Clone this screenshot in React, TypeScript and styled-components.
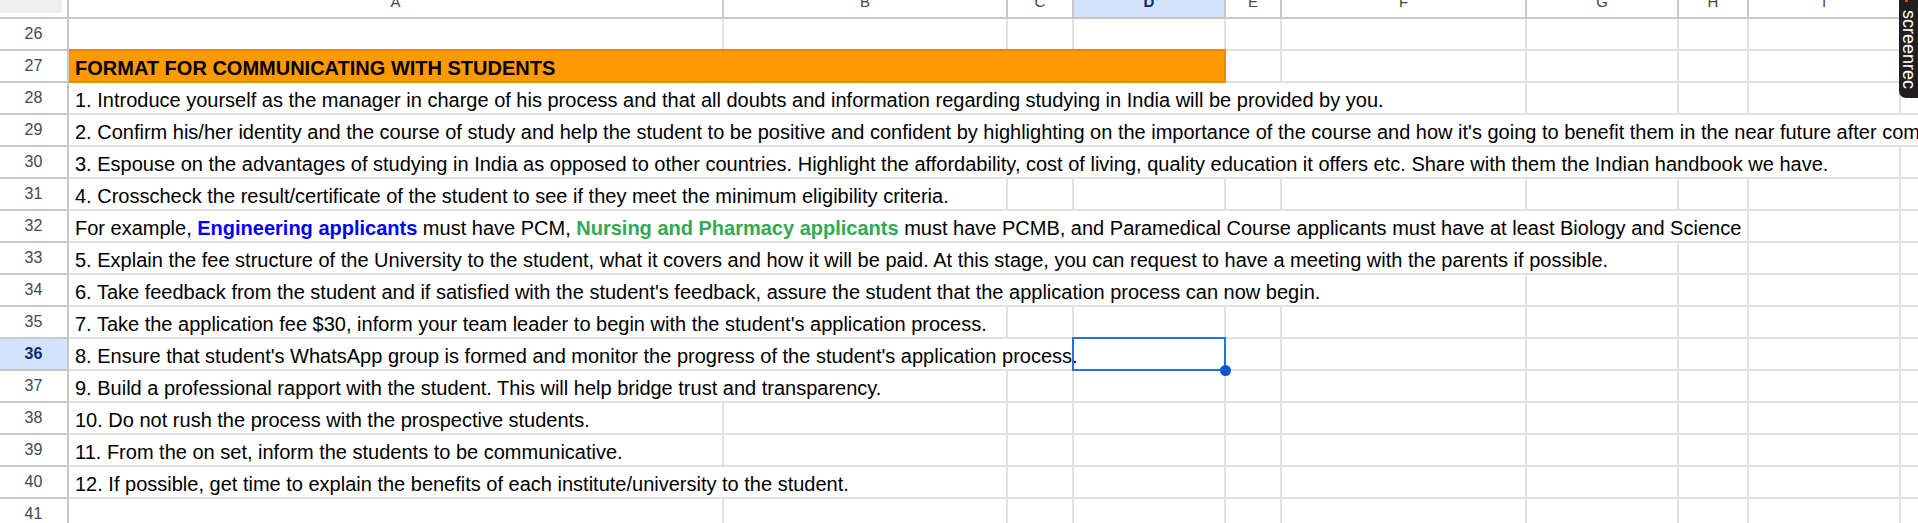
import React from "react";
import styled, { createGlobalStyle } from "styled-components";

const GlobalStyle = createGlobalStyle`
  html, body {
    margin: 0;
    padding: 0;
    background: #ffffff;
    overflow: hidden;
  }
  body {
    font-family: "Liberation Sans", Arial, sans-serif;
  }
`;

const COLS = [655, 284, 66, 152, 56, 245, 152, 70, 152, 152];
const LETTERS = ["A", "B", "C", "D", "E", "F", "G", "H", "I", "J"];
const SELECTED_COL = 3;
const SELECTED_ROW = 36;
const GRID = COLS.map((w) => `${w}px`).join(" ");

const Sheet = styled.div`
  position: relative;
  width: 1918px;
  height: 523px;
  overflow: hidden;
  background: #ffffff;
`;

const HeaderRow = styled.div`
  display: flex;
  height: 19px;
`;

const Corner = styled.div`
  width: 67px;
  height: 17px;
  flex: none;
  border-right: 2px solid #c7c7c7;
  border-bottom: 2px solid #c7c7c7;
  display: flex;
  align-items: flex-start;
  justify-content: flex-start;
`;

const CornerShade = styled.div`
  width: 62px;
  height: 13px;
  background: #efefef;
`;

const ColHeaders = styled.div`
  display: grid;
  grid-template-columns: ${GRID};
  flex: none;
`;

const ColHeader = styled.div<{ $active?: boolean }>`
  box-sizing: content-box;
  height: 9px;
  padding-bottom: 8px;
  border-right: 2px solid #c7c7c7;
  border-bottom: 2px solid #c7c7c7;
  background: ${(p) => (p.$active ? "#d3e3fd" : "#ffffff")};
  color: ${(p) => (p.$active ? "#0b2a6b" : "#444746")};
  font-weight: ${(p) => (p.$active ? 700 : 400)};
  font-size: 15px;
  line-height: 15px;
  display: flex;
  align-items: flex-end;
  justify-content: center;
  overflow: visible;
`;

const Row = styled.div`
  display: flex;
  height: 32px;
`;

const RowHeader = styled.div<{ $active?: boolean }>`
  width: 67px;
  height: 30px;
  flex: none;
  border-right: 2px solid #c7c7c7;
  border-bottom: 2px solid #c7c7c7;
  background: ${(p) => (p.$active ? "#d3e3fd" : "#ffffff")};
  color: ${(p) => (p.$active ? "#0b2a6b" : "#444746")};
  font-weight: ${(p) => (p.$active ? 700 : 400)};
  font-size: 16px;
  display: flex;
  align-items: center;
  justify-content: center;
`;

const Cells = styled.div`
  display: grid;
  grid-template-columns: ${GRID};
  flex: none;
`;

const Cell = styled.div`
  height: 30px;
  border-right: 2px solid #e1e1e1;
  border-bottom: 2px solid #e1e1e1;
  background: #ffffff;
  position: relative;
`;

const TextCell = styled.div<{ $span: number }>`
  grid-column: span ${(p) => p.$span};
  position: relative;
  z-index: 1;
  box-sizing: border-box;
  height: 32px;
  border-right: 2px solid #e1e1e1;
  border-bottom: 2px solid #e1e1e1;
  background: #ffffff;
  display: flex;
  align-items: flex-end;
  padding: 0 0 1px 6px;
  white-space: nowrap;
  overflow: visible;
  font-size: 20px;
  line-height: 23px;
  color: #000000;
`;

const TitleCell = styled(TextCell)`
  background: #ff9900;
  border-right-color: #e68a00;
  border-bottom-color: #e68a00;
  box-shadow: 0 -2px 0 #e68a00;
  font-weight: 700;
`;

const Line = styled.span`
  display: block;
`;

const Strong = styled.span<{ $color: string }>`
  font-weight: 700;
  color: ${(p) => p.$color};
`;

const SelectionBox = styled.div`
  position: absolute;
  z-index: 2;
  left: -2px;
  top: -2px;
  right: -2px;
  bottom: -2px;
  border: 2px solid #1a73e8;
  pointer-events: none;
`;

const FillHandle = styled.div`
  position: absolute;
  right: -7px;
  bottom: -7px;
  width: 11px;
  height: 11px;
  border-radius: 50%;
  background: #0b57d0;
`;

const Badge = styled.div`
  position: absolute;
  z-index: 3;
  top: 0;
  right: 0;
  width: 19px;
  height: 98px;
  background: #1f1f1f;
  border-bottom-left-radius: 7px;
  color: #ffffff;
  writing-mode: vertical-rl;
  font-family: "Liberation Sans", Arial, sans-serif;
  font-size: 18px;
  line-height: 19px;
  display: flex;
  align-items: center;
  justify-content: flex-end;
  padding-bottom: 9px;
  box-sizing: border-box;
`;

const BadgeDot = styled.span`
  position: absolute;
  top: 0;
  left: 6px;
  width: 3px;
  height: 2px;
  background: #e53935;
`;

type RowData = {
  n: number;
  span?: number;
  title?: boolean;
  content?: React.ReactNode;
};

const rows: RowData[] = [
  { n: 26 },
  { n: 27, title: true, span: 4, content: "FORMAT FOR COMMUNICATING WITH STUDENTS" },
  {
    n: 28,
    span: 6,
    content:
      "1. Introduce yourself as the manager in charge of his process and that all doubts and information regarding studying in India will be provided by you.",
  },
  {
    n: 29,
    span: 10,
    content:
      "2. Confirm his/her identity and the course of study and help the student to be positive and confident by highlighting on the importance of the course and how it's going to benefit them in the near future after completion.",
  },
  {
    n: 30,
    span: 9,
    content:
      "3. Espouse on the advantages of studying in India as opposed to other countries. Highlight the affordability, cost of living, quality education it offers etc. Share with them the Indian handbook we have.",
  },
  {
    n: 31,
    span: 2,
    content:
      "4. Crosscheck the result/certificate of the student to see if they meet the minimum eligibility criteria.",
  },
  {
    n: 32,
    span: 8,
    content: (
      <>
        For example, <Strong $color="#0000ff">Engineering applicants</Strong> must have PCM,{" "}
        <Strong $color="#34a853">Nursing and Pharmacy applicants</Strong> must have PCMB, and
        Paramedical Course applicants must have at least Biology and Science
      </>
    ),
  },
  {
    n: 33,
    span: 7,
    content:
      "5. Explain the fee structure of the University to the student, what it covers and how it will be paid. At this stage, you can request to have a meeting with the parents if possible.",
  },
  {
    n: 34,
    span: 6,
    content:
      "6. Take feedback from the student and if satisfied with the student's feedback, assure the student that the application process can now begin.",
  },
  {
    n: 35,
    span: 2,
    content:
      "7. Take the application fee $30, inform your team leader to begin with the student's application process.",
  },
  {
    n: 36,
    span: 3,
    content:
      "8. Ensure that student's WhatsApp group is formed and monitor the progress of the student's application process.",
  },
  {
    n: 37,
    span: 2,
    content:
      "9. Build a professional rapport with the student. This will help bridge trust and transparency.",
  },
  { n: 38, span: 1, content: "10. Do not rush the process with the prospective students." },
  { n: 39, span: 1, content: "11. From the on set, inform the students to be communicative." },
  {
    n: 40,
    span: 2,
    content:
      "12. If possible, get time to explain the benefits of each institute/university to the student.",
  },
  { n: 41 },
];

function BodyRow({ row }: { row: RowData }) {
  const span = row.span ?? 0;
  const rest: number[] = [];
  for (let i = span; i < COLS.length; i++) rest.push(i);
  const active = row.n === SELECTED_ROW;
  return (
    <Row>
      <RowHeader $active={active}>{row.n}</RowHeader>
      <Cells>
        {row.title ? (
          <TitleCell $span={span}>
            <Line>{row.content}</Line>
          </TitleCell>
        ) : span > 0 ? (
          <TextCell $span={span}>
            <Line>{row.content}</Line>
          </TextCell>
        ) : null}
        {rest.map((c) => (
          <Cell key={c}>
            {active && c === SELECTED_COL ? (
              <SelectionBox>
                <FillHandle />
              </SelectionBox>
            ) : null}
          </Cell>
        ))}
      </Cells>
    </Row>
  );
}

export default function App() {
  return (
    <>
      <GlobalStyle />
      <Sheet>
        <HeaderRow>
          <Corner>
            <CornerShade />
          </Corner>
          <ColHeaders>
            {LETTERS.map((l, i) => (
              <ColHeader key={l} $active={i === SELECTED_COL}>
                {l}
              </ColHeader>
            ))}
          </ColHeaders>
        </HeaderRow>
        {rows.map((r) => (
          <BodyRow key={r.n} row={r} />
        ))}
        <Badge>
          <BadgeDot />
          screenrec
        </Badge>
      </Sheet>
    </>
  );
}
